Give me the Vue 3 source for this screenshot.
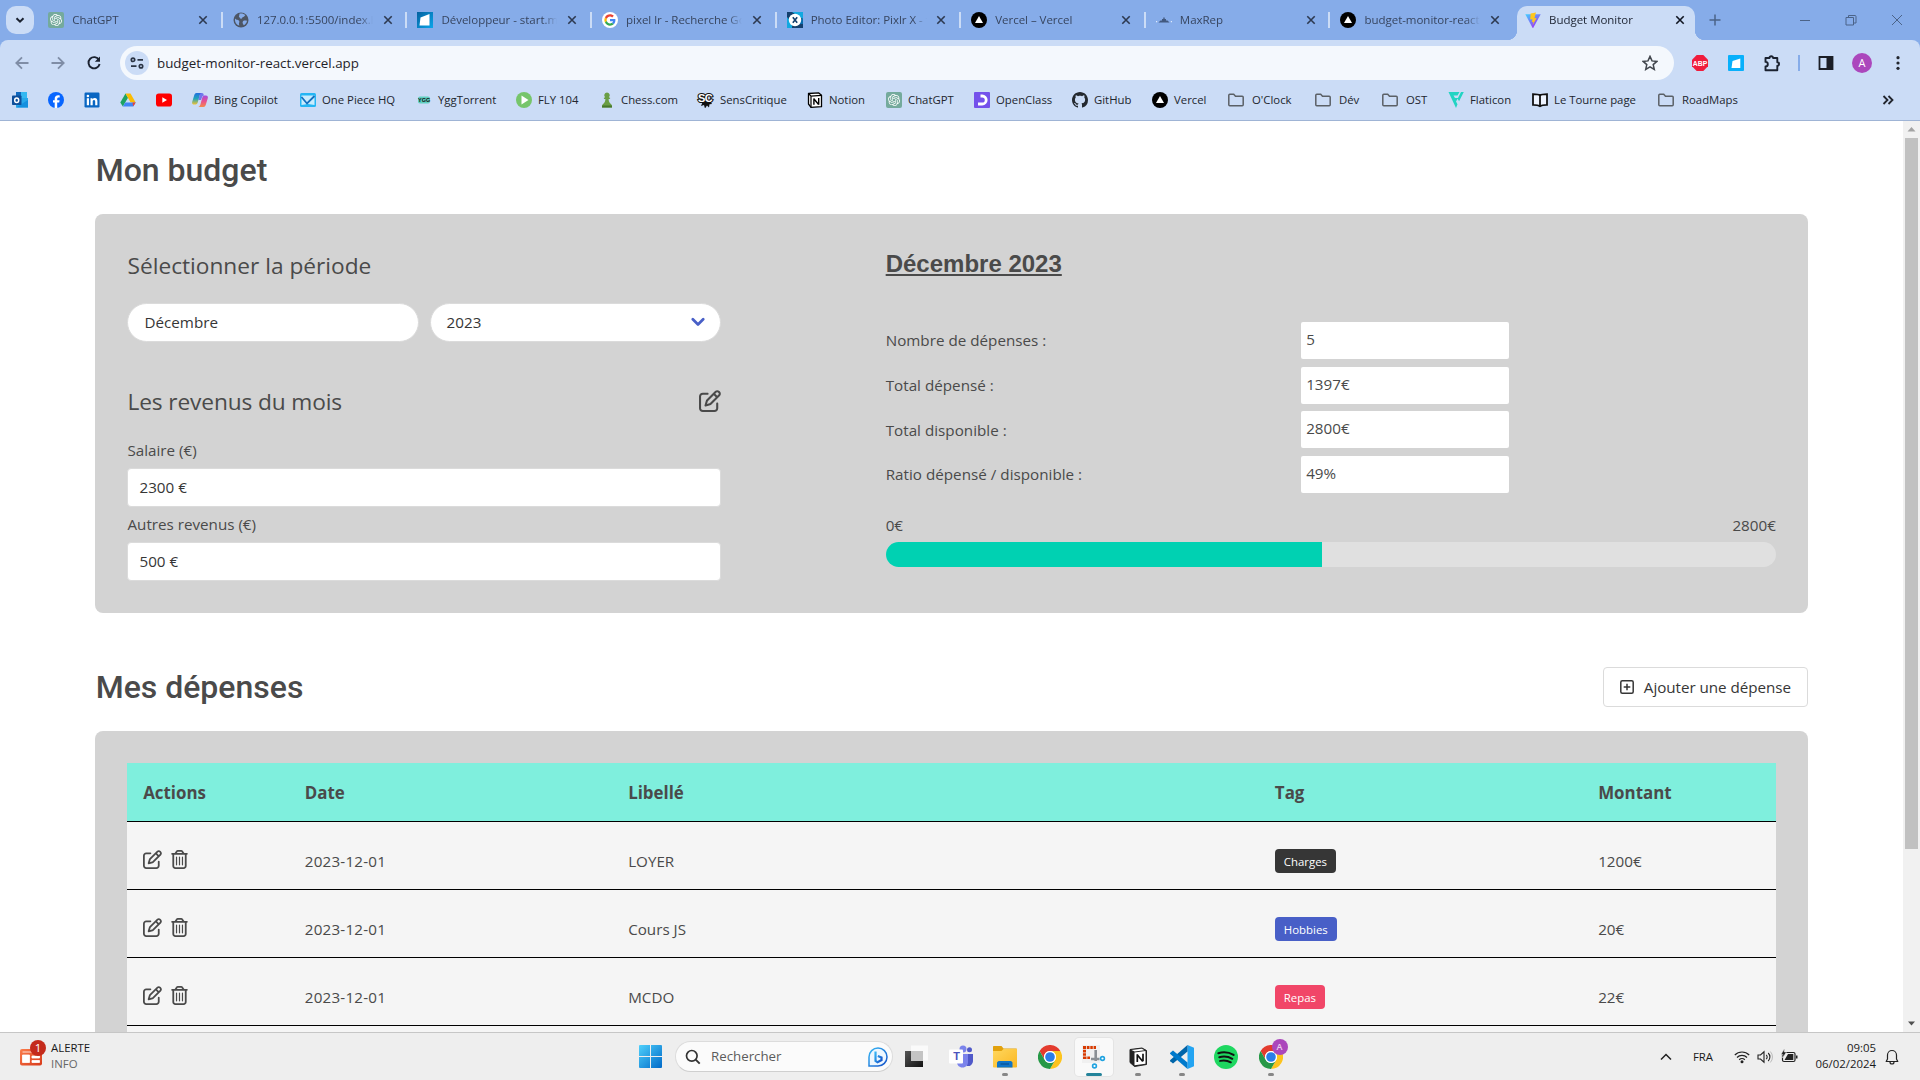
<script setup>
const tabs = [
  { icon: 'chatgpt', title: 'ChatGPT' },
  { icon: 'globe', title: '127.0.0.1:5500/index.html' },
  { icon: 'start', title: 'Développeur - start.me' },
  { icon: 'google', title: 'pixel lr - Recherche Google' },
  { icon: 'pixlr', title: 'Photo Editor: Pixlr X - free' },
  { icon: 'vercel', title: 'Vercel – Vercel' },
  { icon: 'maxrep', title: 'MaxRep' },
  { icon: 'vercel', title: 'budget-monitor-react' },
  { icon: 'vite', title: 'Budget Monitor', active: true }
]

const bookmarks = [
  { icon: 'outlook', w: 36 },
  { icon: 'facebook', w: 36 },
  { icon: 'linkedin', w: 36 },
  { icon: 'drive', w: 36 },
  { icon: 'youtube', w: 36 },
  { icon: 'copilot', label: 'Bing Copilot', w: 108 },
  { icon: 'piece', label: 'One Piece HQ', w: 116 },
  { icon: 'ygg', mark: 'YGG', label: 'YggTorrent', w: 100 },
  { icon: 'fly', label: 'FLY 104', w: 83 },
  { icon: 'chess', label: 'Chess.com', w: 99 },
  { icon: 'sens', mark: 'SC', label: 'SensCritique', w: 109 },
  { icon: 'notion', label: 'Notion', w: 79 },
  { icon: 'chatgpt', label: 'ChatGPT', w: 88 },
  { icon: 'openclass', label: 'OpenClass', w: 98 },
  { icon: 'github', label: 'GitHub', w: 80 },
  { icon: 'vercel', label: 'Vercel', w: 76 },
  { icon: 'folder', label: "O'Clock", w: 87 },
  { icon: 'folder', label: 'Dév', w: 67 },
  { icon: 'folder', label: 'OST', w: 66 },
  { icon: 'flaticon', label: 'Flaticon', w: 84 },
  { icon: 'book', label: 'Le Tourne page', w: 126 },
  { icon: 'folder', label: 'RoadMaps', w: 100 }
]

const incomes = [
  { label: 'Salaire (€)', value: '2300 €' },
  { label: 'Autres revenus (€)', value: '500 €' }
]

const stats = [
  { label: 'Nombre de dépenses :', value: '5' },
  { label: 'Total dépensé :', value: '1397€' },
  { label: 'Total disponible :', value: '2800€' },
  { label: 'Ratio dépensé / disponible :', value: '49%' }
]
const ratio = 49

const expenses = [
  { date: '2023-12-01', label: 'LOYER', tag: 'Charges', tone: 'dark', amount: '1200€' },
  { date: '2023-12-01', label: 'Cours JS', tag: 'Hobbies', tone: 'link', amount: '20€' },
  { date: '2023-12-01', label: 'MCDO', tag: 'Repas', tone: 'danger', amount: '22€' }
]

const apps = [
  { icon: 'taskview' },
  { icon: 'teams', mark: 'T' },
  { icon: 'explorer', open: true },
  { icon: 'chrome' },
  { icon: 'snip', open: true, active: true },
  { icon: 'notionApp', open: true },
  { icon: 'vscode', open: true },
  { icon: 'spotify' },
  { icon: 'chrome', open: true, badge: 'A' }
]
</script>

<template>
  <svg class="defs" aria-hidden="true">
    <defs>
      <linearGradient id="g-win" x1="0" y1="0" x2="1" y2="1"><stop offset="0" stop-color="#4fd0fb" /><stop offset="1" stop-color="#0069c8" /></linearGradient>
      <linearGradient id="g-vite" x1="0" y1="0" x2="0.8" y2="1"><stop offset="0" stop-color="#41d1ff" /><stop offset="1" stop-color="#a626f5" /></linearGradient>
      <linearGradient id="g-start" x1="0" y1="0" x2="1" y2="1"><stop offset="0" stop-color="#04619f" /><stop offset="1" stop-color="#0aa5ea" /></linearGradient>
      <linearGradient id="g-folder" x1="0" y1="0" x2="1" y2="1"><stop offset="0" stop-color="#ffd75e" /><stop offset="1" stop-color="#fbb722" /></linearGradient>
      <linearGradient id="g-dark" x1="0" y1="0" x2="1" y2="1"><stop offset="0" stop-color="#555" /><stop offset="1" stop-color="#111" /></linearGradient>
      <linearGradient id="g-bing" x1="0" y1="0" x2="1" y2="1"><stop offset="0" stop-color="#37b8f5" /><stop offset="1" stop-color="#1450c8" /></linearGradient>
      <linearGradient id="g-news" x1="0" y1="0" x2="1" y2="1"><stop offset="0" stop-color="#fb7c4b" /><stop offset="1" stop-color="#d83b1b" /></linearGradient>
      <linearGradient id="g-cop1" x1="0" y1="0" x2="0" y2="1"><stop offset="0" stop-color="#1f6fe0" /><stop offset="0.5" stop-color="#23a6b8" /><stop offset="1" stop-color="#f2c230" /></linearGradient>
      <linearGradient id="g-cop2" x1="0" y1="0" x2="0" y2="1"><stop offset="0" stop-color="#a24be0" /><stop offset="0.5" stop-color="#e8508f" /><stop offset="1" stop-color="#f58a4b" /></linearGradient>
    </defs>
    <symbol id="chatgpt" viewBox="0 0 32 32"><rect width="32" height="32" rx="4" fill="#74aa9c" /><path transform="translate(4 4)" fill="#fff" d="M22.2819 9.8211a5.9847 5.9847 0 0 0-.5157-4.9108 6.0462 6.0462 0 0 0-6.5098-2.9A6.0651 6.0651 0 0 0 4.9807 4.1818a5.9847 5.9847 0 0 0-3.9977 2.9 6.0462 6.0462 0 0 0 .7427 7.0966 5.98 5.98 0 0 0 .511 4.9107 6.051 6.051 0 0 0 6.5146 2.9001A5.9847 5.9847 0 0 0 13.2599 24a6.0557 6.0557 0 0 0 5.7718-4.2058 5.9894 5.9894 0 0 0 3.9977-2.9001 6.0557 6.0557 0 0 0-.7475-7.0729zm-9.022 12.6081a4.4755 4.4755 0 0 1-2.8764-1.0408l.1419-.0804 4.7783-2.7582a.7948.7948 0 0 0 .3927-.6813v-6.7369l2.02 1.1686a.071.071 0 0 1 .038.052v5.5826a4.504 4.504 0 0 1-4.4945 4.4944zm-9.6607-4.1254a4.4708 4.4708 0 0 1-.5346-3.0137l.142.0852 4.783 2.7582a.7712.7712 0 0 0 .7806 0l5.8428-3.3685v2.3324a.0804.0804 0 0 1-.0332.0615L9.74 19.9502a4.4992 4.4992 0 0 1-6.1408-1.6464zM2.3408 7.8956a4.485 4.485 0 0 1 2.3655-1.9728V11.6a.7664.7664 0 0 0 .3879.6765l5.8144 3.3543-2.0201 1.1685a.0757.0757 0 0 1-.071 0l-4.8303-2.7865A4.504 4.504 0 0 1 2.3408 7.872zm16.5963 3.8558L13.1038 8.364 15.1192 7.2a.0757.0757 0 0 1 .071 0l4.8303 2.7913a4.4944 4.4944 0 0 1-.6765 8.1042v-5.6772a.79.79 0 0 0-.407-.667zm2.0107-3.0231l-.142-.0852-4.7735-2.7818a.7759.7759 0 0 0-.7854 0L9.409 9.2297V6.8974a.0662.0662 0 0 1 .0284-.0615l4.8303-2.7866a4.4992 4.4992 0 0 1 6.6802 4.66zM8.3065 12.863l-2.02-1.1638a.0804.0804 0 0 1-.038-.0567V6.0742a4.4992 4.4992 0 0 1 7.3757-3.4537l-.142.0805L8.704 5.459a.7948.7948 0 0 0-.3927.6813zm1.0976-2.3654l2.602-1.4998 2.6069 1.4998v2.9994l-2.5974 1.4997-2.6067-1.4997Z" /></symbol>
    <symbol id="globe" viewBox="0 0 16 16"><circle cx="8" cy="8" r="7.5" fill="#4d5665" /><path d="M2 6.500c1.500 2 3.500 .8 4.200 2.600.6 1.600-.9 2 .2 4.300C3.500 13 1.700 10.500 2 6.500zM6.500 1.800c2-.6 4.500 0 5.800 1.500-1 .4-.7 1.600-2.200 1.800-1 .2-.8 1.700-2 1.700-1.500 0-1-1.500-2.200-1.700zM10 9.200c1-.8 2.500-.6 4-.4-.2 1.900-1.500 3.600-3.200 4.400C10 12 9 10.300 10 9.200z" fill="#86ace9" /></symbol>
    <symbol id="start" viewBox="0 0 16 16"><rect width="16" height="16" fill="url(#g-start)" /><path d="M3.500 5.500 12.500 2v11.500h-10z" fill="#fff" /></symbol>
    <symbol id="google" viewBox="0 0 68 68"><circle cx="34" cy="34" r="34" fill="#fff" /><g transform="translate(10 10)"><path fill="#ea4335" d="M24 9.500c3.540 0 6.710 1.220 9.210 3.600l6.850-6.850C35.900 2.380 30.470 0 24 0 14.620 0 6.510 5.380 2.560 13.220l7.980 6.190C12.430 13.720 17.740 9.500 24 9.500z" /><path fill="#4285f4" d="M46.980 24.550c0-1.570-.15-3.090-.38-4.550H24v9.020h12.940c-.58 2.960-2.260 5.480-4.780 7.180l7.730 6c4.510-4.180 7.090-10.360 7.090-17.650z" /><path fill="#fbbc05" d="M10.530 28.590c-.48-1.450-.76-2.990-.76-4.590s.27-3.140.76-4.590l-7.980-6.190C.92 16.460 0 20.120 0 24c0 3.880.92 7.540 2.560 10.780l7.970-6.190z" /><path fill="#34a853" d="M24 48c6.480 0 11.930-2.130 15.890-5.810l-7.730-6c-2.150 1.450-4.920 2.300-8.160 2.300-6.260 0-11.570-4.220-13.470-9.910l-7.980 6.190C6.510 42.620 14.620 48 24 48z" /></g></symbol>
    <symbol id="pixlr" viewBox="0 0 16 16"><path fill="#14406e" d="M0 0h16v16H0z" /><path fill="#12a8e0" d="M5 0h11v7l-5-3zM0 5l5 6v5H0z" /><path fill="#0b6fb0" d="M10 12l6-6v6z" /><circle cx="8" cy="8" r="6.200" fill="#fff" /><path d="M5.800 5.200l4.400 5.600M10.200 5.200l-4.400 5.600" stroke="#14406e" stroke-width="1.600" /></symbol>
    <symbol id="vercel" viewBox="0 0 16 16"><circle cx="8" cy="8" r="8" fill="#000" /><path d="M8 4l4 7H4z" fill="#fff" /></symbol>
    <symbol id="maxrep" viewBox="0 0 16 16"><path d="M2.500 10.500l2-2h1.500V7h1.300V5.500h1.400V7H10v1.500h1.500l2 2z" fill="#42597f" /><path d="M0 9h1.200v1.200H0zM14.800 9H16v1.200h-1.200z" fill="#dfeafc" /></symbol>
    <symbol id="vite" viewBox="0 0 16 16"><path d="M.3 2.300 15.700 2.300 8.300 15.700a.5.5 0 0 1-.8 0z" fill="url(#g-vite)" /><path d="M11 .4 5.600 1.500 5.200 7.600l2.200-.4-.6 3 1.700-.5-.9 3.500 4-7.200-2.200.3z" fill="#ffc61e" /></symbol>
    <symbol id="outlook" viewBox="0 0 16 16"><path fill="#35b8f1" d="M4 0h11v6H4z" /><path fill="#1068bd" d="M4 0h5v6H4z" /><path fill="#28a8ea" d="M4 6h12v9.500H4z" /><path fill="#1490df" d="M4 15.500 16 8v7.500z" /><rect y="3.500" width="9.500" height="9.500" rx=".8" fill="#0f4f9a" /><ellipse cx="4.700" cy="8.200" rx="2" ry="2.300" fill="none" stroke="#fff" stroke-width="1.500" /></symbol>
    <symbol id="facebook" viewBox="0 0 16 16"><circle cx="8" cy="8" r="8" fill="#0866ff" /><path d="M6.700 16v-5.400H5V8.200h1.700V7c0-2.600 1.200-3.800 3.600-3.800.5 0 1.100.1 1.400.2v2.100h-.9c-1.200 0-1.600.5-1.600 1.600v1.100h2.400l-.4 2.400h-2V16z" fill="#fff" /></symbol>
    <symbol id="linkedin" viewBox="0 0 16 16"><rect x=".5" y=".5" width="15" height="15" rx="1.200" fill="#0a66c2" /><path d="M2.800 6.300h2.200v7H2.800zM6.500 6.300h2v1c.5-.8 1.300-1.200 2.300-1.200 2 0 2.600 1.300 2.600 3.200v4h-2.200V9.800c0-1-.2-1.800-1.200-1.800-1.100 0-1.300.8-1.300 1.700v3.600H6.500z" fill="#fff" /><circle cx="3.900" cy="4" r="1.300" fill="#fff" /></symbol>
    <symbol id="drive" viewBox="0 0 16 16"><path fill="#1ea362" d="M5.500 1.500 8 5.800 2.800 14.500 .3 10.500z" /><path fill="#fbbc04" d="M5.500 1.500h5l5.200 9h-5z" /><path fill="#4285f4" d="M5.300 10.500h10.400l-2.500 4H2.800z" /><path fill="#ea4335" d="M12.500 10.500h3.200l-2.500 4z" /></symbol>
    <symbol id="youtube" viewBox="0 0 16 16"><rect y="1.500" width="16" height="13" rx="2.800" fill="#f00" /><path d="M6.300 5.300 11 8l-4.700 2.700z" fill="#fff" /></symbol>
    <symbol id="copilot" viewBox="0 0 16 16"><path d="M4.500 1h5.200c-1.500.4-2 2-2.500 4l-1.500 5.500C5.200 12 4.500 12.500 3 12.500H2c-1.800 0-2.200-1.500-1.700-3l2-6.500C2.700 1.800 3.400 1 4.500 1z" fill="url(#g-cop1)" /><path d="M11.500 15H6.300c1.500-.4 2-2 2.500-4l1.500-5.500C10.800 4 11.500 3.500 13 3.500h1c1.800 0 2.200 1.500 1.700 3l-2 6.500c-.4 1.200-1.100 2-2.200 2z" fill="url(#g-cop2)" /><path d="M8 1h2c1 0 1.600.8 1.900 2.500-1 .2-1.700.8-2 2L9 8H6.400l.9-3.500C7.700 3 7.500 1.500 8 1z" fill="#5b5bea" opacity=".8" /></symbol>
    <symbol id="piece" viewBox="0 0 16 16"><rect y="1" width="16" height="14" rx="1.500" fill="#25b6f4" /><path d="M1.500 3.500h13v9.500l-6.500-1-6.500 1z" fill="#c9ecfd" /><path d="M1.500 5l5.500 6.500L14.500 4" fill="none" stroke="#1470c0" stroke-width="1.800" /></symbol>
    <symbol id="ygg" viewBox="0 0 16 16"><rect x="2" y="4.500" width="12" height="7" rx="2" fill="#5fcfc0" /></symbol>
    <symbol id="fly" viewBox="0 0 16 16"><circle cx="8" cy="8" r="8" fill="#76c56b" /><path d="M5.500 3.500 12.500 8l-7 4.500z" fill="#fff" /></symbol>
    <symbol id="chess" viewBox="0 0 16 16"><path d="M8 .5a2.800 2.800 0 0 1 1.900 4.800l1.400.8-.6 1H9.600c.2 2.500.8 3.800 2.300 5 .8.700 1.100 1.300 1.100 3.400H3c0-2.100.3-2.700 1.100-3.400 1.500-1.200 2.100-2.500 2.300-5H5.300l-.6-1 1.400-.8A2.800 2.800 0 0 1 8 .5z" fill="#6a9e45" /><path d="M3 13.500h10v2H3z" fill="#47782d" /></symbol>
    <symbol id="sens" viewBox="0 0 16 16"><path d="M5 9h7l2 3-2.500.3-.5 3.200-2-2-2 3-1-3.500-3 1z" fill="#111" /></symbol>
    <symbol id="notion" viewBox="0 0 16 16"><path d="M1.500 1.500 11.500.8 14.500 3.200v11.500L4 15.300 1.500 12z" fill="#fff" stroke="#000" stroke-width="1.300" stroke-linejoin="round" /><path d="M1.500 1.500 4 4.200l10.500-.8M4 4v11.500" fill="none" stroke="#000" stroke-width="1.200" /><path d="M6.900 12.800V6.500M6.600 6.500l5 6M11.700 12.800V6" stroke="#000" stroke-width="1.400" fill="none" /></symbol>
    <symbol id="openclass" viewBox="0 0 16 16"><rect width="16" height="16" rx="1" fill="#7451eb" /><path d="M6.500 4h1.700a4 4 0 0 1 0 8H4" fill="none" stroke="#fff" stroke-width="2.800" /></symbol>
    <symbol id="github" viewBox="0 0 16 16"><path fill="#24292f" d="M8 0C3.580 0 0 3.580 0 8c0 3.540 2.290 6.530 5.470 7.590.4.070.55-.17.55-.38 0-.19-.01-.82-.01-1.490-2.010.37-2.530-.49-2.690-.94-.09-.23-.48-.94-.82-1.130-.28-.15-.68-.52-.01-.53.63-.01 1.080.58 1.230.82.72 1.210 1.870.87 2.330.66.07-.52.28-.87.51-1.070-1.780-.2-3.640-.89-3.640-3.950 0-.87.31-1.590.82-2.150-.08-.2-.36-1.020.08-2.120 0 0 .67-.21 2.200.82.64-.18 1.320-.27 2-.27s1.360.09 2 .27c1.530-1.040 2.200-.82 2.200-.82.44 1.100.16 1.920.08 2.120.51.56.82 1.270.82 2.150 0 3.070-1.870 3.750-3.650 3.950.29.25.54.73.54 1.480 0 1.070-.01 1.930-.01 2.200 0 .21.15.46.55.38A8.010 8.010 0 0 0 16 8c0-4.420-3.580-8-8-8z" /></symbol>
    <symbol id="folder" viewBox="0 0 16 16"><path d="M.8 3.200c0-.6.4-1 1-1h3.900l1.800 2h6.700c.6 0 1 .4 1 1v7.600c0 .6-.4 1-1 1H1.800c-.6 0-1-.4-1-1z" fill="none" stroke="#5b6066" stroke-width="1.500" /></symbol>
    <symbol id="flaticon" viewBox="0 0 16 16"><path d="M.5 0h11L9.500 3.500H5.500L7 6h3l-2 3.500 1.500 2.700L8 16zM13 0h2.800l-4.700 9.300-1.500-2.600z" fill="#21d4c3" /></symbol>
    <symbol id="book" viewBox="0 0 16 16"><path d="M8 3.500C6.500 2.300 4 2.200 1 2.200v10.600c3 0 5.500.2 7 1.400 1.500-1.200 4-1.400 7-1.400V2.200c-3 0-5.500.1-7 1.300zM8 3.500v10.700" fill="#eef4ff" stroke="#111" stroke-width="1.800" /></symbol>
    <symbol id="edit" viewBox="0 0 512 512"><path fill="currentColor" d="M441 58.900L453.100 71c9.400 9.400 9.400 24.600 0 33.900L424 134.100 377.900 88 407 58.900c9.400-9.400 24.600-9.400 33.900 0zM209.800 256.200L344 121.900 390.100 168 255.800 302.200c-2.900 2.900-6.500 5-10.400 6.100l-58.500 16.700 16.700-58.500c1.100-3.900 3.200-7.500 6.100-10.400zM373.100 25L175.800 222.200c-8.700 8.700-15 19.400-18.300 31.100l-28.600 100c-2.400 8.400-.1 17.400 6.100 23.600s15.200 8.500 23.600 6.100l100-28.600c11.800-3.400 22.500-9.700 31.100-18.300L487 138.900c28.100-28.100 28.100-73.700 0-101.800L474.900 25C446.800-3.100 401.200-3.100 373.100 25zM88 64C39.400 64 0 103.400 0 152V424c0 48.600 39.400 88 88 88H360c48.600 0 88-39.400 88-88V312c0-13.300-10.700-24-24-24s-24 10.700-24 24V424c0 22.100-17.900 40-40 40H88c-22.100 0-40-17.900-40-40V152c0-22.100 17.900-40 40-40H200c13.300 0 24-10.700 24-24s-10.700-24-24-24H88z" /></symbol>
    <symbol id="trash" viewBox="0 0 448 512"><path fill="currentColor" d="M170.500 51.600L151.500 80h145l-19-28.400c-1.500-2.200-4-3.600-6.700-3.600H177.100c-2.700 0-5.200 1.300-6.700 3.600zm147-26.600L354.200 80H368h48 8c13.300 0 24 10.700 24 24s-10.700 24-24 24h-8V432c0 44.200-35.800 80-80 80H112c-44.200 0-80-35.800-80-80V128H24c-13.300 0-24-10.700-24-24S10.700 80 24 80h8H80 93.800l36.700-55.100C140.900 9.400 158.400 0 177.100 0h93.700c18.700 0 36.200 9.400 46.600 24.900zM80 128V432c0 17.700 14.300 32 32 32H336c17.700 0 32-14.300 32-32V128H80zm80 64V400c0 8.800-7.200 16-16 16s-16-7.200-16-16V192c0-8.800 7.200-16 16-16s16 7.200 16 16zm80 0V400c0 8.800-7.200 16-16 16s-16-7.200-16-16V192c0-8.800 7.200-16 16-16s16 7.200 16 16zm80 0V400c0 8.800-7.200 16-16 16s-16-7.200-16-16V192c0-8.800 7.200-16 16-16s16 7.200 16 16z" /></symbol>
    <symbol id="taskview" viewBox="0 0 24 24"><path d="M6 0.500h17v15H6z" fill="#fafafa" /><path d="M0 6h18v16H0z" fill="url(#g-dark)" /><path d="M6 6h12v10H6z" fill="#c4c4c4" /></symbol>
    <symbol id="teams" viewBox="0 0 24 24"><circle cx="14" cy="4" r="3.500" fill="#7b83eb" /><circle cx="20.500" cy="4.800" r="2.500" fill="#5059c9" /><path d="M16 9h8v7a5 5 0 0 1-6 5z" fill="#5059c9" /><path d="M8 9h11v8c0 3-2 5.500-5.500 5.500S8 20 8 17z" fill="#7b83eb" /><rect y="4.500" width="14" height="14" rx="1" fill="#fff" /></symbol>
    <symbol id="explorer" viewBox="0 0 24 24"><path d="M0 2c0-.6.400-1 1-1h7.500l2 2.500H23c.6 0 1 .4 1 1V22H0z" fill="#e2a10c" /><path d="M0 6h8.500l2-2H24v17.500c0 .5-.5 1-1 1H1c-.5 0-1-.5-1-1z" fill="url(#g-folder)" /><path d="M4 22.500V18c0-1 .8-2 2-2h11.500c1.200 0 2 1 2 2v4.500z" fill="#0f75c8" /><path d="M7.500 19h8.500" stroke="#084f91" stroke-width="1.200" /></symbol>
    <symbol id="chrome" viewBox="0 0 48 48"><circle cx="24" cy="24" r="24" fill="#fff" /><path fill="#e33b2e" d="M3.200 12A24 24 0 0 1 44.800 12H24a12 12 0 0 0-10.400 18z" /><path fill="#fcc31e" d="M44.800 12A24 24 0 0 1 24 48l10.400-18A12 12 0 0 0 24 12z" /><path fill="#279847" d="M24 48A24 24 0 0 1 3.200 12l10.400 18a12 12 0 0 0 20.800 0z" /><circle cx="24" cy="24" r="12" fill="#fff" /><circle cx="24" cy="24" r="9.600" fill="#2b7de9" /></symbol>
    <symbol id="snip" viewBox="0 0 24 24"><path d="M0 0h18v18H0z" fill="#f0f0f0" /><g fill="#d83b01"><path d="M1 1h3.200v3H1zM5 1h2.500v3H5zM8.300 1h2.500v3H8.300zM11.600 1H14v3h-2.400zM1 4.800h3v2.600H1zM1 8.200h3v2.600H1zM1 11.500h3.500V14H1zM5.300 11.500H8V14H5.300z" /></g><path d="M13.700 5v11M9 14h8.500" fill="none" stroke="#8a8f94" stroke-width="2.600" /><circle cx="20.500" cy="13.500" r="1.900" fill="#fff" stroke="#21a3e0" stroke-width="1.600" /><circle cx="12.500" cy="21" r="1.900" fill="#fff" stroke="#21a3e0" stroke-width="1.600" /></symbol>
    <symbol id="notionApp" viewBox="0 0 24 24"><path d="M4 4.500 16 3l4.500 2.500v14L8.500 21.500 4 17.500z" fill="#222" stroke="#222" stroke-linejoin="round" /><path d="M8.500 7.500 19.500 6v12.800l-11 1.500z" fill="#fff" /><path d="M5.500 4.900 15.800 3.800l2.700 1.500-9.800 1.100z" fill="#fff" /><path d="M11.300 17V9.300M11 9.500l5.800 7M17 16.200V8.700" stroke="#111" stroke-width="1.700" fill="none" /></symbol>
    <symbol id="vscode" viewBox="0 0 24 24"><path d="M17.500 0 24 2.800v18.400L17.500 24z" fill="#23a4f2" /><path d="M17.500 0v6.500L3 18.500 .3 16.300c-.4-.4-.4-1 0-1.400z" fill="#0065a9" /><path d="M17.500 24v-6.500L3 5.500.3 7.700c-.4.4-.4 1 0 1.400z" fill="#007acc" /></symbol>
    <symbol id="spotify" viewBox="0 0 24 24"><circle cx="12" cy="12" r="12" fill="#1ed760" /><path d="M4.300 8.200c5-1.500 10.800-.9 15.300 1.700M5.300 12.200c4.500-1.200 9-.7 13 1.600M6.100 15.900c3.700-.9 7.300-.5 10.700 1.400" fill="none" stroke="#111" stroke-width="2" stroke-linecap="round" /></symbol>
  </svg>

  <div class="screen">
    <header class="browser">
      <div class="tabstrip">
        <div class="tabsearch"><svg width="12" height="12" viewBox="0 0 12 12"><path d="M2.500 4.200 6 7.700l3.500-3.500" fill="none" stroke="#1b2230" stroke-width="2" /></svg></div>
        <div v-for="(t, i) in tabs" :key="i" class="tab" :class="{ active: t.active, sep: i > 0 && !t.active }">
          <svg class="i16"><use :href="'#' + t.icon" /></svg>
          <span class="tab-title">{{ t.title }}</span>
          <svg class="close" width="10" height="10" viewBox="0 0 10 10"><path d="M1.300 1.300l7.400 7.400M8.700 1.300 1.300 8.700" stroke="currentColor" stroke-width="1.600" /></svg>
        </div>
        <svg class="newtab" width="12" height="12" viewBox="0 0 12 12"><path d="M6 .5v11M.5 6h11" stroke="#4b6388" stroke-width="1.500" /></svg>
        <div class="winctl">
          <svg width="12" height="12" viewBox="0 0 12 12"><path d="M1 6.500h10" stroke="#4b6388" /></svg>
          <svg width="12" height="12" viewBox="0 0 12 12"><path d="M1 3.500h7.500V11H1zM3.500 3.500v-2H10c.6 0 1 .4 1 1V9H8.500" fill="none" stroke="#4b6388" /></svg>
          <svg width="12" height="12" viewBox="0 0 12 12"><path d="M1 1l10 10M11 1 1 11" stroke="#4b6388" /></svg>
        </div>
      </div>

      <div class="toolbar">
        <div class="nav">
          <svg width="16" height="16" viewBox="0 0 16 16"><path d="M14.500 8H2.500M8 2.300 2.300 8 8 13.700" fill="none" stroke="#7f8da6" stroke-width="1.800" /></svg>
          <svg width="16" height="16" viewBox="0 0 16 16"><path d="M1.500 8h12M8 2.300 13.700 8 8 13.700" fill="none" stroke="#7f8da6" stroke-width="1.800" /></svg>
          <svg width="16" height="16" viewBox="0 0 16 16"><path d="M13 4.900A5.600 5.600 0 1 0 13.600 9" fill="none" stroke="#1b2230" stroke-width="1.900" /><path d="M14 1.500v5.200H8.800z" fill="#1b2230" /></svg>
        </div>
        <div class="address">
          <span class="chip"><svg width="14" height="14" viewBox="0 0 14 14"><g fill="none" stroke="#2b3444" stroke-width="1.700"><circle cx="3" cy="3.800" r="1.700" /><path d="M7.500 3.800H13M1 10.200h5.500" /><circle cx="11" cy="10.200" r="1.700" /></g></svg></span>
          <span class="url">budget-monitor-react.vercel.app</span>
          <svg class="star" width="16" height="16" viewBox="0 0 16 16"><path d="M8 1.400l2 4.500 4.900.5-3.700 3.200 1.100 4.800L8 11.900l-4.300 2.500 1.100-4.800L1.100 6.400 6 5.900z" fill="none" stroke="#42474e" stroke-width="1.500" /></svg>
        </div>
        <div class="extensions">
          <svg class="i16" viewBox="0 0 16 16"><path d="M4.700 0h6.600L16 4.700v6.600L11.300 16H4.700L0 11.300V4.700z" fill="#f01c3c" /><text x="8" y="10.600" text-anchor="middle" font-family="Liberation Sans" font-weight="700" font-size="6.800" fill="#fff">ABP</text></svg>
          <svg class="i16" viewBox="0 0 16 16"><rect width="16" height="16" rx="1" fill="#08b0fb" /><path d="M4.500 6 12.300 3.500v9.500H3.500z" fill="#fff" /></svg>
          <svg class="i18" viewBox="0 0 18 18"><path d="M2.500 4h4a1.800 1.800 0 0 1 3.600 0h4.200v4.200a1.800 1.800 0 0 1 0 3.600v4.400H2.500v-3.700a2.300 2.300 0 0 0 0-4.600z" fill="none" stroke="#1b2230" stroke-width="1.900" stroke-linejoin="round" /></svg>
          <i class="divider"></i>
          <svg class="i16" viewBox="0 0 16 16"><path d="M1.500 2h13v12h-13z" fill="none" stroke="#1b1e26" stroke-width="1.800" /><path d="M8.500 2h6v12h-6z" fill="#1b1e26" /></svg>
          <span class="avatar">A</span>
          <svg class="i16" viewBox="0 0 16 16"><g fill="#22262e"><circle cx="8" cy="2.700" r="1.600" /><circle cx="8" cy="8" r="1.600" /><circle cx="8" cy="13.300" r="1.600" /></g></svg>
        </div>
      </div>

      <nav class="bookmarks">
        <a v-for="(b, i) in bookmarks" :key="i" class="bookmark" :style="{ width: b.w + 'px' }">
          <svg class="i16"><use :href="'#' + b.icon" /></svg>
          <b v-if="b.mark" class="mark" :class="b.icon">{{ b.mark }}</b>
          <span v-if="b.label" :class="{ wide: b.icon === 'folder' }">{{ b.label }}</span>
        </a>
        <svg class="more" width="12" height="10" viewBox="0 0 12 10"><path d="M1.500 1l4 4-4 4M6.500 1l4 4-4 4" fill="none" stroke="#22262e" stroke-width="1.800" /></svg>
      </nav>
    </header>

    <div class="viewport">
      <main class="page">
        <h1>Mon budget</h1>
        <section class="card budget">
          <div class="left">
            <h3>Sélectionner la période</h3>
            <div class="selects">
              <div class="select">Décembre</div>
              <div class="select">2023<svg width="14" height="10" viewBox="0 0 14 10"><path d="M1.800 2.200 7 7.500l5.200-5.300" fill="none" stroke="#485fc7" stroke-width="2.700" stroke-linecap="round" stroke-linejoin="round" /></svg></div>
            </div>
            <div class="incomes-head">
              <h3>Les revenus du mois</h3>
              <svg class="edit-lg"><use href="#edit" /></svg>
            </div>
            <div v-for="f in incomes" :key="f.label" class="field">
              <label>{{ f.label }}</label>
              <div class="input">{{ f.value }}</div>
            </div>
          </div>
          <div class="right">
            <h4>Décembre 2023</h4>
            <div class="stats">
              <div v-for="s in stats" :key="s.label" class="stat">
                <span>{{ s.label }}</span>
                <div class="stat-value">{{ s.value }}</div>
              </div>
            </div>
            <div class="bounds"><span>0€</span><span>2800€</span></div>
            <div class="progress"><div class="progress-fill" :style="{ width: ratio + '%' }"></div></div>
          </div>
        </section>

        <div class="section-head">
          <h1>Mes dépenses</h1>
          <button class="add">
            <svg width="14" height="14" viewBox="0 0 14 14"><path d="M7 3.700v6.600M3.700 7h6.600" stroke="#363636" stroke-width="1.500" /><rect x=".8" y=".8" width="12.400" height="12.400" rx="1.500" fill="none" stroke="#363636" stroke-width="1.500" /></svg>
            <span>Ajouter une dépense</span>
          </button>
        </div>

        <section class="card">
          <div class="row head">
            <span>Actions</span><span>Date</span><span>Libellé</span><span>Tag</span><span>Montant</span>
          </div>
          <div v-for="e in expenses" :key="e.label" class="row">
            <span class="actions"><svg class="edit-sm"><use href="#edit" /></svg><svg class="trash"><use href="#trash" /></svg></span>
            <span class="date">{{ e.date }}</span>
            <span>{{ e.label }}</span>
            <span class="tagcell"><span class="tag" :class="e.tone">{{ e.tag }}</span></span>
            <span>{{ e.amount }}</span>
          </div>
          <div class="row"></div>
        </section>
      </main>
      <div class="scrollbar">
        <svg width="17" height="17" viewBox="0 0 17 17"><path d="M4.500 10.500h8l-4-4.500z" fill="#a3a3a3" /></svg>
        <div class="thumb"></div>
        <svg width="17" height="17" viewBox="0 0 17 17"><path d="M5 6.500h7l-3.500 4z" fill="#505050" /></svg>
      </div>
    </div>

    <footer class="taskbar">
      <div class="widget">
        <svg width="28" height="27" viewBox="0 0 28 27"><rect x="0" y="9" width="22" height="16.500" rx="2" fill="url(#g-news)" /><path d="M2.500 12h17M2.500 15h7v7.500h-7zM12 16h7.500v2H12zM12 20.500h7.500v2H12z" fill="#fff" stroke="#fff" stroke-width=".8" /><circle cx="18" cy="8" r="8" fill="#c42b1c" /><text x="18" y="12" text-anchor="middle" font-family="Open Sans" font-size="11.500" fill="#fff">1</text></svg>
        <div class="widget-text"><span>ALERTE</span><span class="muted">INFO</span></div>
      </div>
      <div class="center">
        <svg class="win" width="23" height="23" viewBox="0 0 23 23"><path d="M0 1a1 1 0 0 1 1-1h10v11H0zM12 0h10a1 1 0 0 1 1 1v10H12zM0 12h11v11H1a1 1 0 0 1-1-1zM12 12h11v10a1 1 0 0 1-1 1H12z" fill="url(#g-win)" /></svg>
        <div class="search">
          <svg width="16" height="16" viewBox="0 0 16 16"><circle cx="6.800" cy="6.800" r="5.300" fill="none" stroke="#333" stroke-width="1.700" /><path d="M10.700 10.700l4 4" stroke="#333" stroke-width="1.900" /></svg>
          <span>Rechercher</span>
          <svg width="20" height="20" viewBox="0 0 20 20"><path d="M1 19v-9a9 9 0 1 1 9 9z" fill="#eef7ff" stroke="url(#g-bing)" stroke-width="1.500" /><path d="M7.500 4.500v9.500l2 1.300 4-2.300v-2.500L9.800 9" fill="none" stroke="url(#g-bing)" stroke-width="2.200" /></svg>
        </div>
        <div class="apps">
          <div v-for="(a, i) in apps" :key="i" class="app" :class="{ open: a.open, active: a.active }">
            <svg class="i24"><use :href="'#' + a.icon" /></svg>
            <b v-if="a.mark" class="mark" :class="a.icon">{{ a.mark }}</b>
            <b v-if="a.badge" class="app-badge">{{ a.badge }}</b>
          </div>
        </div>
      </div>
      <div class="tray">
        <svg width="12" height="8" viewBox="0 0 12 8"><path d="M1 6.500l5-5 5 5" fill="none" stroke="#222" stroke-width="1.500" /></svg>
        <span class="lang">FRA</span>
        <svg width="16" height="14" viewBox="0 0 16 14"><g fill="none" stroke="#222" stroke-width="1.200"><path d="M.8 5a10.200 10.200 0 0 1 14.400 0M3 7.500a7 7 0 0 1 10 0M5.200 9.800a4 4 0 0 1 5.600 0" /></g><circle cx="8" cy="11.800" r="1.500" fill="#222" /></svg>
        <svg class="vol" width="16" height="14" viewBox="0 0 16 14"><path d="M1 5v4h2.500L7 12.200V1.800L3.500 5z" fill="none" stroke="#222" stroke-width="1.100" /><path d="M9.200 4.800a3 3 0 0 1 0 4.400M11.200 3a5.600 5.600 0 0 1 0 8" fill="none" stroke="#222" stroke-width="1.100" /><path d="M13.300 1.500a8 8 0 0 1 0 11" fill="none" stroke="#bbb" /></svg>
        <svg class="bat" width="17" height="15" viewBox="0 0 17 15"><rect x="1.500" y="3.500" width="12.500" height="9" rx="1.500" fill="none" stroke="#222" stroke-width="1.200" /><path d="M7 5H12.300V11H3.500zM15 6.500h1.500V9.500H15z" fill="#222" /><path d="M3.500 -.5 0 5.500h2L1.500 9l4-6h-2.200z" fill="#222" stroke="#eee" stroke-width=".5" /></svg>
        <div class="clock"><span>09:05</span><span>06/02/2024</span></div>
        <svg width="14" height="16" viewBox="0 0 14 16"><path d="M1.200 12.500 2.500 10V6a4.500 4.500 0 0 1 9 0v4l1.300 2.500zM5 13a2 2 0 0 0 4 0" fill="none" stroke="#222" stroke-width="1.200" stroke-linejoin="round" /></svg>
      </div>
    </footer>
  </div>
</template>

<style>
body { overflow: hidden; }
</style>

<style scoped>
* { box-sizing: border-box; }
svg { flex: none; display: block; }
.defs { position: absolute; width: 0; height: 0; }
.screen {
  width: 1920px; height: 1080px; display: flex; flex-direction: column; overflow: hidden;
  background: #fff; color: #4a4a4a; font-family: "Open Sans", "Noto Sans", sans-serif; font-size: 15.2px; line-height: 24px;
}
.i16 { width: 16px; height: 16px; }
.i18 { width: 18px; height: 18px; }
.i24 { width: 24px; height: 24px; }
.mark { position: absolute; font-family: "Liberation Sans", Arial, sans-serif; white-space: nowrap; }
.mark.ygg { left: 2px; top: 8px; font-size: 5.500px; line-height: 8px; color: #101010; }
.mark.sens { left: 0; top: 4px; font-size: 11px; line-height: 12px; letter-spacing: -.5px; color: #fff; -webkit-text-stroke: 2.200px #111; paint-order: stroke fill; }
.mark.teams { left: 11px; top: 12.500px; font-size: 11px; line-height: 12px; color: #4b53bc; }

/* Browser chrome */
.browser { flex: none; height: 121px; background: #86ace9; font-size: 11.500px; }
.tabstrip { height: 40px; display: flex; align-items: center; padding-left: 6px; }
.tabsearch { width: 28px; height: 28px; border-radius: 10px; background: #cbdcf6; display: flex; align-items: center; justify-content: center; margin-right: 2.300px; }
.tab { width: 184.600px; height: 40px; flex: none; display: flex; align-items: center; padding-left: 12px; color: #37455f; position: relative; }
.tab.sep::before { content: ""; position: absolute; left: 0; top: 12px; width: 2px; height: 16px; background: #cbdcf6; }
.tab-title { margin-left: 8px; width: 116px; overflow: hidden; white-space: nowrap; letter-spacing: -.03px; -webkit-mask-image: linear-gradient(90deg, #000 88%, transparent); mask-image: linear-gradient(90deg, #000 88%, transparent); }
.close { margin-left: 9.700px; color: #2d3950; }
.tab.active { color: #1b2230; z-index: 0; }
.tab.active .close { color: #101521; }
.tab.active::before { content: ""; position: absolute; z-index: -1; left: 4px; right: 3px; top: 6px; bottom: 0; border-radius: 10px 10px 0 0; background: #cbdcf6; }
.tab.active::after { content: ""; position: absolute; z-index: -2; left: -6px; right: -7px; bottom: 0; height: 10px;
  background: radial-gradient(circle at 0 0, transparent 10px, #cbdcf6 10.500px) left / 10px 10px no-repeat, radial-gradient(circle at 100% 0, transparent 10px, #cbdcf6 10.500px) right / 10px 10px no-repeat; }
.newtab { margin-left: 11.500px; }
.winctl { margin-left: auto; display: flex; gap: 34px; padding-right: 17px; }
.toolbar { height: 46px; display: flex; align-items: center; background: #cbdcf6; border-radius: 8px 8px 0 0; }
.nav { display: flex; gap: 20px; padding-left: 14px; width: 120px; }
.address { width: 1554px; height: 34px; border-radius: 17px; background: #f4f8fd; display: flex; align-items: center; padding: 0 16px 0 5px; }
.chip { width: 24px; height: 24px; border-radius: 50%; background: #cbdcf6; display: flex; align-items: center; justify-content: center; }
.url { margin-left: 8px; font-size: 13.350px; color: #1f2329; }
.star { margin-left: auto; }
.extensions { display: flex; align-items: center; padding-left: 18px; }
.extensions > * + * { margin-left: 20px; }
.extensions > .i18 { margin-left: 19px; }
.extensions > .divider { width: 2px; height: 16px; background: #86ace9; margin-left: 17px; }
.extensions > .divider + svg { margin-left: 18px; }
.extensions > .avatar { width: 20px; height: 20px; border-radius: 50%; background: #ab47bc; color: #fff; font-size: 11px; line-height: 20px; text-align: center; margin-left: 18px; }
.extensions > .avatar + svg { margin-left: 18px; }
.bookmarks { height: 35px; display: flex; align-items: center; padding: 0 26px 6px 12px; background: #cbdcf6; border-bottom: 1px solid #9fb4d5; color: #22262e; font-size: 11.350px; }
.bookmark { position: relative; flex: none; display: flex; align-items: center; white-space: nowrap; }
.bookmark span { margin-left: 6px; }
.bookmark span.wide { margin-left: 8px; }
.more { margin-left: auto; }

/* Page */
.viewport { flex: 1; min-height: 0; display: flex; }
.page { width: 1903px; padding: 31px 95.150px 0; overflow: hidden; background: #fff; }
h1, h3, h4 { margin: 0; }
h1 { font: 500 32px/36px Roboto, sans-serif; color: #4a4a4a; padding-left: .5px; }
.card { background: #d3d3d3; border-radius: 8px; padding: 32px; }
.budget { margin-top: 26px; height: 399px; display: flex; justify-content: space-between; }
.left { width: 593.600px; padding: 2px 0 0 .35px; }
.right { width: 890.200px; }
h3 { font-size: 22.700px; line-height: 36px; font-weight: 400; }
.selects { display: flex; gap: 11px; margin-top: 18.500px; }
.select, .input { background: #fff; border: 1px solid #dbdbdb; height: 39px; color: #363636; display: flex; align-items: center; }
.select { flex: 1; border-radius: 20px; padding: 0 15px 1px 16px; justify-content: space-between; }
.incomes-head { display: flex; justify-content: space-between; align-items: center; margin-top: 42.500px; }
.incomes-head h3 { letter-spacing: -.12px; }
.edit-lg { width: 22px; height: 22px; margin-bottom: 3px; }
.field { margin-top: 5px; }
.incomes-head + .field { margin-top: 18px; }
.field label { display: block; }
.input { margin-top: 6px; border-radius: 4px; padding-left: 11px; padding-bottom: 1px; }
h4 { font: 700 24px/36px "Liberation Sans", Arial, sans-serif; text-decoration: underline; }
.stats { display: flex; flex-direction: column; gap: 7.700px; margin-top: 40px; }
.stat { display: flex; align-items: center; height: 37px; }
.stat > span { width: 415.500px; padding-bottom: .6px; letter-spacing: .02px; }
.stat-value { width: 208px; height: 37px; background: #fff; border-radius: 2px; padding: 5px 5px 0; }
.bounds { display: flex; justify-content: space-between; margin-top: 19.900px; }
.progress { margin-top: 5px; height: 25px; border-radius: 13px; background: #e0e0e0; overflow: hidden; }
.progress-fill { height: 100%; background: #00d1b2; }
.section-head { display: flex; justify-content: space-between; align-items: center; height: 40px; margin: 54px 0 24px; }
.add { width: 205px; height: 40px; border: 1px solid #dbdbdb; border-radius: 4px; background: #fff; color: #363636; font: inherit; letter-spacing: -.04px; display: flex; align-items: center; padding: 0 0 0 16px; gap: 10px; white-space: nowrap; }
.row { display: grid; grid-template-columns: 1fr 2fr 4fr 2fr 1fr; height: 68px; padding: 11px 16px 0; align-items: center; background: #f5f5f5; border-bottom: 1px solid #000; }
.row.head { height: 59px; padding-top: 2px; background: #7fefdd; font-size: 16.900px; font-weight: 700; }
.actions { display: flex; gap: 9px; padding: 0 0 3px .3px; }
.edit-sm { width: 19px; height: 19px; }
.trash { width: 17px; height: 19px; }
.date { letter-spacing: .2px; }
.tagcell { display: flex; }
.tag { height: 24px; line-height: 25px; border-radius: 4px; padding: 0 9px; font-size: 11.400px; color: #fff; }
.tag.dark { background: #363636; }
.tag.link { background: #485fc7; }
.tag.danger { background: #f14668; }
.scrollbar { width: 17px; background: #f1f1f1; display: flex; flex-direction: column; align-items: center; }
.thumb { width: 13px; height: 711px; background: #c1c1c1; margin-bottom: auto; }

/* Taskbar */
.taskbar { flex: none; height: 48px; border-top: 1px solid #c6c6c6; background: #eee; display: flex; align-items: center; color: #1a1a1a; font-size: 11.400px; line-height: 16px; }
.widget { display: flex; width: 639px; padding-left: 20px; }
.widget > svg { margin-top: -1px; }
.widget-text { display: flex; flex-direction: column; margin: -1px 0 0 3px; }
.muted { color: #666; }
.center { display: flex; align-items: center; }
.search { margin-left: 13px; width: 218px; height: 31px; border-radius: 16px; background: #fbfbfb; border: 1px solid #dcdcdc; border-bottom-color: #cfcfcf; display: flex; align-items: center; padding: 0 4px 0 9px; color: #5c5c5c; font-size: 13.300px; }
.search span { margin: -2px auto 0 10px; }
.apps { display: flex; margin-left: 5px; gap: 6.200px; }
.app { position: relative; width: 38px; height: 38px; display: flex; align-items: center; justify-content: center; border-radius: 4px; }
.app.active { background: #f9f9f9; box-shadow: 0 0 0 1px #e4e4e4; }
.app.open::after { content: ""; position: absolute; left: 16px; bottom: 0; width: 6px; height: 3px; border-radius: 2px; background: #868686; }
.app.active::after { left: 11px; width: 16px; background: #24839a; }
.app-badge { position: absolute; left: 20px; top: 1px; width: 16px; height: 16px; border-radius: 50%; background: #ab47bc; color: #e9cdee; font-size: 9px; font-weight: 600; line-height: 16px; text-align: center; }
.tray { margin-left: auto; display: flex; align-items: center; padding-right: 21px; }
.lang { margin: 0 21px 0 21px; }
.vol { margin-left: 7px; }
.bat { margin-left: 8px; }
.clock { width: 78px; display: flex; flex-direction: column; align-items: flex-end; margin: -2px 9px 0 0; }
</style>
